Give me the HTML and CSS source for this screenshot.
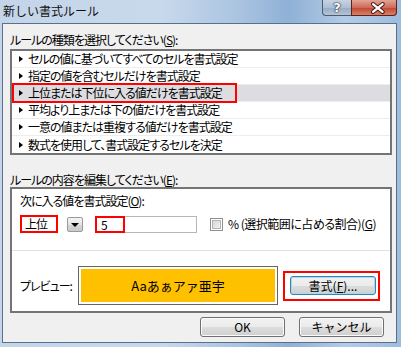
FILE: index.html
```html
<!DOCTYPE html>
<html lang="ja">
<head>
  <meta charset="UTF-8">
  <title>新しい書式ルール</title>
  <link rel="stylesheet" href="styles.css">
</head>
<body>
  <div class="window">
    <div class="titlebar">
      <span class="title">新しい書式ルール</span>
      <div class="caption">
        <span class="cap help">?</span>
        <span class="cap close">
          <svg width="46" height="16" viewBox="0 0 46 16">
            <path d="M22 4 L32 12 M32 4 L22 12" stroke="#4a1c16" stroke-width="4.5" stroke-linecap="round"/>
            <path d="M22 4 L32 12 M32 4 L22 12" stroke="#fff" stroke-width="2.4" stroke-linecap="round"/>
          </svg>
        </span>
      </div>
    </div>

    <div class="client">
      <!-- rule types -->
      <div class="label">ルールの種類を選択してください(<u>S</u>):</div>
      <ul class="rule-list">
        <li><i class="arrow"></i>セルの値に基づいてすべてのセルを書式設定</li>
        <li><i class="arrow"></i>指定の値を含むセルだけを書式設定</li>
        <li class="selected"><span class="mark"><i class="arrow"></i>上位または下位に入る値だけを書式設定</span></li>
        <li><i class="arrow"></i>平均より上または下の値だけを書式設定</li>
        <li><i class="arrow"></i>一意の値または重複する値だけを書式設定</li>
        <li><i class="arrow"></i>数式を使用して、書式設定するセルを決定</li>
      </ul>

      <!-- rule details -->
      <div class="label second">ルールの内容を編集してください(<u>E</u>):</div>
      <div class="group">
        <div class="sublabel">次に入る値を書式設定(<u>O</u>):</div>
        <div class="controls">
          <div class="combo">
            <span class="combo-text">上位</span>
            <span class="combo-btn"><i class="down"></i></span>
          </div>
          <div class="textbox"><span class="num">5</span></div>
          <span class="check"></span>
          <span class="check-label">% (選択範囲に占める割合)(<u>G</u>)</span>
        </div>
        <div class="sep"></div>
        <div class="preview-row">
          <span class="preview-label">プレビュー:</span>
          <div class="preview-box"><div class="swatch">Aaあぁアァ亜宇</div></div>
          <div class="format-wrap"><button class="btn focus">書式(<u>F</u>)...</button></div>
        </div>
      </div>

      <div class="actions">
        <button class="btn">OK</button>
        <button class="btn">キャンセル</button>
      </div>
    </div>
  </div>
</body>
</html>
```

FILE: styles.css
```css
html, body {
  margin: 0;
  padding: 0;
}
body {
  width: 401px;
  height: 347px;
  overflow: hidden;
  font-family: "Noto Sans CJK JP", sans-serif;
  font-size: 12px;
  color: #000;
}
u {
  text-decoration: underline;
  text-underline-offset: 1px;
}
.window {
  height: 347px;
  box-sizing: border-box;
  padding: 0 4px 4px 2px;
  display: flex;
  flex-direction: column;
  background: linear-gradient(90deg, #c4d5e9 0%, #c9d9ec 40%, #a9c3e0 60%, #8fb1d6 72%, #b3cbe5 86%, #9fbcdd 100%);
}
.titlebar {
  height: 23px;
  display: flex;
  justify-content: space-between;
  align-items: flex-start;
}
.title {
  margin: 3px 0 0 1px;
  line-height: 16px;
  color: #101010;
}
.caption {
  display: flex;
}
.cap {
  height: 16px;
  box-sizing: border-box;
  border: 1px solid #4c5b70;
  border-top: none;
  display: flex;
  align-items: center;
  justify-content: center;
}
.help {
  width: 29px;
  border-radius: 0 0 0 4px;
  border-right: none;
  background: linear-gradient(#c7d3e1, #aebfd3 50%, #98abc2 51%, #b3c4d8);
  color: #fff;
  font: bold 13px "DejaVu Sans", sans-serif;
  text-shadow: 0 0 1px #233040, 0 0 1px #233040, 0 0 2px #233040;
}
.close {
  width: 46px;
  border-color: #5e2018;
  border-radius: 0 0 4px 0;
  background: linear-gradient(#e0a497, #cf6a58 50%, #c0452f 51%, #d6826b);
}
.close svg {
  display: block;
}
.client {
  flex: 1;
  background: #f0f0f0;
  border: 1px solid #5a6f8c;
  padding: 0 4px 0 7px;
  display: flex;
  flex-direction: column;
  font-feature-settings: "palt";
  letter-spacing: -1px;
}
.label {
  margin-top: 9px;
  height: 14px;
  line-height: 14px;
}
.label.second {
  margin-top: 18px;
}
.rule-list {
  margin: 2px 0 0;
  padding: 0;
  list-style: none;
  border: 2px solid #747474;
  background: #fff;
}
.rule-list li {
  height: 17px;
  box-sizing: border-box;
  border-bottom: 1px solid #ededed;
  display: flex;
  align-items: center;
  padding-left: 7px;
  line-height: 14px;
}
.rule-list li:last-child {
  border-bottom: none;
}
.rule-list li.selected {
  background: #dddde1;
  padding-left: 0;
  align-items: flex-start;
}
.mark {
  display: flex;
  align-items: center;
  height: 16px;
  box-sizing: border-box;
  margin-left: 2px;
  padding: 0 13px 0 5px;
  outline: 2px solid #f00;
}
.arrow {
  width: 0;
  height: 0;
  border-left: 4px solid #000;
  border-top: 3px solid transparent;
  border-bottom: 3px solid transparent;
  margin-right: 5px;
}
.group {
  height: 126px;
  box-sizing: border-box;
  border: 2px solid #747474;
  background: #fff;
  padding: 5px 0 0 8px;
}
.sublabel {
  height: 14px;
  line-height: 14px;
}
.controls {
  margin-top: 7px;
  height: 18px;
  display: flex;
  align-items: center;
}
.combo {
  display: flex;
  align-items: center;
  height: 18px;
}
.combo-text {
  width: 38px;
  height: 18px;
  box-sizing: border-box;
  border: 2px solid #f00;
  padding-left: 3px;
  line-height: 14px;
}
.combo-btn {
  margin-left: 9px;
  width: 16px;
  height: 15px;
  box-sizing: border-box;
  border: 1px solid #9a9a9a;
  border-radius: 2px;
  background: linear-gradient(#f4f4f4, #e4e4e4 50%, #d6d6d6 51%, #cacaca);
  display: flex;
  align-items: center;
  justify-content: center;
}
.down {
  width: 0;
  height: 0;
  border-top: 4px solid #000;
  border-left: 4px solid transparent;
  border-right: 4px solid transparent;
  margin-top: 1px;
}
.textbox {
  margin-left: 12px;
  width: 102px;
  height: 17px;
  box-sizing: border-box;
  border: 1px solid #b5b7bd;
  display: flex;
}
.num {
  width: 30px;
  box-sizing: border-box;
  margin: -1px 0 -1px -1px;
  border: 2px solid #f00;
  padding-left: 4px;
  line-height: 13px;
}
.check {
  margin-left: 13px;
  width: 13px;
  height: 13px;
  box-sizing: border-box;
  border: 1px solid #8e8f8f;
  box-shadow: inset 0 0 0 1px #fff, inset 0 0 0 2px #b3b3b3;
  background: linear-gradient(135deg, #d0d0d0, #f7f7f7);
}
.check-label {
  margin-left: 5px;
  line-height: 14px;
  letter-spacing: -0.5px;
}
.sep {
  margin: 17px 0 0 -8px;
  height: 1px;
  background: #e2e2e2;
}
.preview-row {
  margin-top: 15px;
  height: 39px;
  display: flex;
  align-items: center;
}
.preview-label {
  width: 58px;
  line-height: 14px;
}
.preview-box {
  width: 200px;
  height: 39px;
  box-sizing: border-box;
  border: 1px solid #646464;
  padding: 2px;
}
.swatch {
  height: 100%;
  background: #ffc000;
  display: flex;
  align-items: center;
  justify-content: center;
  font-size: 13px;
  font-feature-settings: normal;
  letter-spacing: 0;
}
.format-wrap {
  margin-left: 5px;
  width: 97px;
  height: 30px;
  box-sizing: border-box;
  border: 2px solid #f00;
  padding-left: 5px;
  display: flex;
  align-items: center;
}
.btn {
  width: 85px;
  height: 20px;
  padding: 0;
  border: 1px solid #707070;
  border-radius: 3px;
  background: linear-gradient(#f2f2f2, #ebebeb 50%, #dddddd 51%, #cfcfcf);
  box-shadow: inset 0 0 0 1px #fbfbfb;
  font-family: "Noto Sans CJK JP", sans-serif;
  font-size: 12px;
  line-height: 16px;
  letter-spacing: 0;
  color: #000;
}
.btn.focus {
  width: 86px;
  height: 19px;
  border-color: #3c7fb1;
  box-shadow: inset 0 0 0 1px #9fdcf8;
}
.actions {
  margin-top: 4px;
  padding-right: 8px;
  display: flex;
  justify-content: flex-end;
  gap: 14px;
}
```
